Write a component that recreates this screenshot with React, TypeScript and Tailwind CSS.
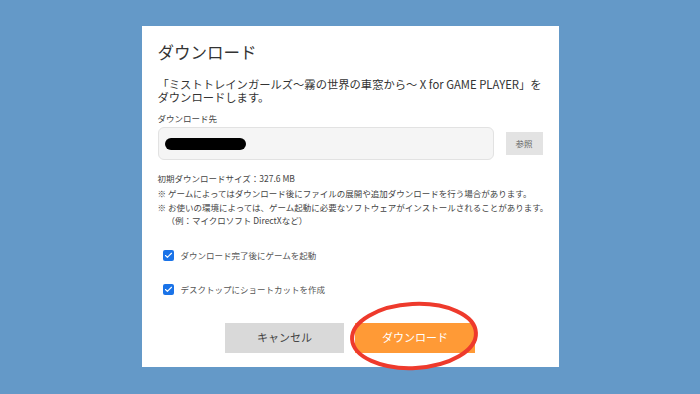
import { Check } from 'lucide-react';

const jp = "font-['Noto_Sans_CJK_JP','Noto_Sans',sans-serif]";

function Option({ label }: { label: string }) {
  return (
    <label className="flex h-[13px] items-center gap-[7px] pl-[5px] text-[8.5px] leading-[13px] text-[#555]">
      <span className="flex h-[11px] w-[11px] items-center justify-center rounded-[2px] bg-[#1a73e8]">
        <Check className="h-[9px] w-[9px] text-white" strokeWidth={3} />
      </span>
      {label}
    </label>
  );
}

export default function App() {
  return (
    <div className={`flex h-[394px] w-[700px] justify-center bg-[#6499c8] pt-[26px] ${jp}`}>
      <div className="relative flex h-[341px] w-[417px] flex-col bg-white px-[16px] pt-[14px]">
        <h1 className="text-[16.5px] leading-[24px] text-[#333]">ダウンロード</h1>

        <p className="mt-[14px] whitespace-nowrap text-[11.3px] leading-[13px] text-[#333]">
          「ミストトレインガールズ〜霧の世界の車窓から〜 X for GAME PLAYER」を
          <br />
          ダウンロードします。
        </p>

        <div className="mt-[8px] text-[8.5px] leading-[12px] text-[#444]">ダウンロード先</div>

        <div className="mt-[3px] flex items-center gap-[12px]">
          <div className="flex h-[33px] w-[338px] items-center rounded-[6px] border border-[#e2e2e2] bg-[#f5f5f5] px-[6px]">
            <span className="h-[12px] w-[81px] rounded-full bg-black" />
          </div>
          <button className="h-[23px] w-[37px] bg-[#e3e3e3] text-[8.5px] text-[#666]">参照</button>
        </div>

        <div className="mt-[11px] text-[8.5px] leading-[14px] text-[#444]">初期ダウンロードサイズ：327.6 MB</div>
        <div className="mt-[2px] whitespace-nowrap text-[8.5px] leading-[13.5px] text-[#444]">
          <div>※ ゲームによってはダウンロード後にファイルの展開や追加ダウンロードを行う場合があります。</div>
          <div>※ お使いの環境によっては、ゲーム起動に必要なソフトウェアがインストールされることがあります。</div>
          <div className="pl-[9px]">（例：マイクロソフト DirectXなど）</div>
        </div>

        <div className="mt-[21px] flex flex-col gap-[21px]">
          <Option label="ダウンロード完了後にゲームを起動" />
          <Option label="デスクトップにショートカットを作成" />
        </div>

        <div className="mt-[27px] flex justify-center gap-[11px]">
          <button className="h-[30px] w-[119px] bg-[#d9d9d9] text-[11px] text-[#444]">キャンセル</button>
          <button className="h-[30px] w-[120px] bg-[#ff9a36] text-[11px] text-white">ダウンロード</button>
        </div>

        <svg
          className="pointer-events-none absolute left-[205px] top-[272px]"
          width="135"
          height="76"
          viewBox="0 0 135 76"
        >
          <ellipse
            cx="67"
            cy="38"
            rx="62"
            ry="32"
            fill="none"
            stroke="#ee3a2c"
            strokeWidth="4"
            transform="rotate(-3 67 38)"
          />
        </svg>
      </div>
    </div>
  );
}
